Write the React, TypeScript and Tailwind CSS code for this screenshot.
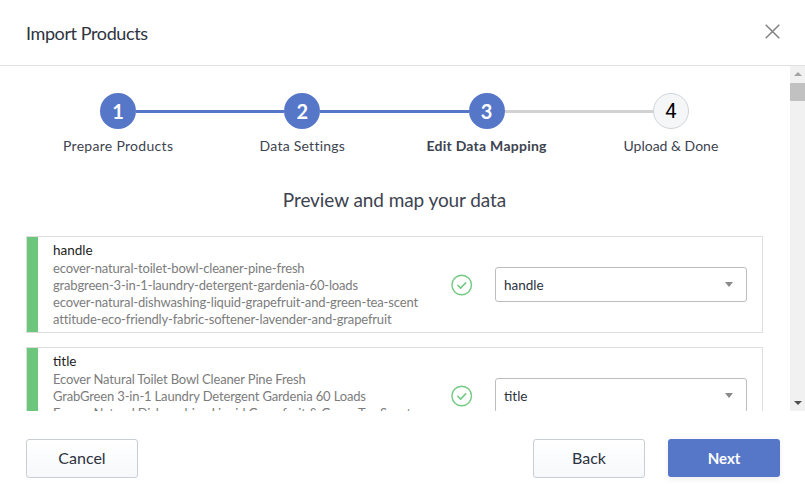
const steps = [
  { n: "1", label: "Prepare Products", state: "done", track: "tracking-[0.3px]" },
  { n: "2", label: "Data Settings", state: "done", track: "tracking-[0.25px]" },
  { n: "3", label: "Edit Data Mapping", state: "active", track: "tracking-[0.25px]" },
  { n: "4", label: "Upload & Done", state: "todo", track: "tracking-normal" },
];

const rows = [
  {
    name: "handle",
    values: [
      "ecover-natural-toilet-bowl-cleaner-pine-fresh",
      "grabgreen-3-in-1-laundry-detergent-gardenia-60-loads",
      "ecover-natural-dishwashing-liquid-grapefruit-and-green-tea-scent",
      "attitude-eco-friendly-fabric-softener-lavender-and-grapefruit",
    ],
  },
  {
    name: "title",
    values: [
      "Ecover Natural Toilet Bowl Cleaner Pine Fresh",
      "GrabGreen 3-in-1 Laundry Detergent Gardenia 60 Loads",
      "Ecover Natural Dishwashing Liquid Grapefruit & Green Tea Scent",
    ],
  },
];

function Step({ step, i }: { step: (typeof steps)[number]; i: number }) {
  const leftColor = i === 0 ? "bg-transparent" : i === 3 ? "bg-[#d2d2d2]" : "bg-[#5676c8]";
  const rightColor = i === 3 ? "bg-transparent" : i === 2 ? "bg-[#d2d2d2]" : "bg-[#5676c8]";
  return (
    <div className="flex flex-col items-center">
      <div className="flex w-full items-center">
        <div className={`h-[3px] flex-1 ${leftColor}`} />
        {step.state === "todo" ? (
          <div className="flex h-[36px] w-[36px] items-center justify-center rounded-full border border-[#d0d3d8] bg-[#f5f6f8] font-['Roboto',sans-serif] text-[20px] text-black">
            {step.n}
          </div>
        ) : (
          <div className="flex h-[36px] w-[36px] items-center justify-center rounded-full bg-[#5676c8] text-[20px] font-bold text-white">
            {step.n}
          </div>
        )}
        <div className={`h-[3px] flex-1 ${rightColor}`} />
      </div>
      <div
        className={`mt-[7px] text-[14px] leading-[20px] text-[#3d4350] ${step.track} ${step.state === "active" ? "font-bold" : ""}`}
      >
        {step.label}
      </div>
    </div>
  );
}

function Row({ row }: { row: (typeof rows)[number] }) {
  return (
    <div className="flex h-[97px] shrink-0 border border-[#dedede] bg-white">
      <div className="w-[11px] shrink-0 bg-[#6cc77c]" />
      <div className="w-[390px] shrink-0 pl-[15px] pt-[4px]">
        <div className="mb-[1px] text-[13.5px] leading-[18px] text-[#1d1d1d]">{row.name}</div>
        <div className="text-[13px] leading-[17px] tracking-[-0.16px] text-[#7c7c7c]">
          {row.values.map((v) => (
            <div key={v} className="whitespace-nowrap">
              {v}
            </div>
          ))}
        </div>
      </div>
      <div className="flex w-[67px] shrink-0 items-start justify-center pt-[37px]">
        <svg width="22" height="22" viewBox="0 0 22 22" fill="none">
          <circle cx="10.7" cy="11" r="9.8" stroke="#74ca83" strokeWidth="1.4" />
          <path d="M6.8 11.3l2.8 2.8 5-5.2" stroke="#74ca83" strokeWidth="1.6" strokeLinecap="round" strokeLinejoin="round" />
        </svg>
      </div>
      <div className="pt-[30px]">
        <div className="flex h-[35px] w-[252px] items-center justify-between rounded-[3px] border border-[#bdbdbd] bg-white pl-[8px] pr-[13px] text-[13.5px] text-[#2c3240]">
          <span className="pt-[1px]">{row.name}</span>
          <span className="h-0 w-0 border-x-[4.5px] border-t-[5px] border-x-transparent border-t-[#8a8a8a]" />
        </div>
      </div>
    </div>
  );
}

export default function App() {
  return (
    <div className="flex h-[495px] w-[805px] flex-col overflow-hidden bg-white font-['Lato',sans-serif]">
      <header className="flex h-[66px] shrink-0 items-center justify-between border-b border-[#e0e0e0] pl-[26px] pr-[25px]">
        <h1 className="text-[18px] leading-none tracking-[-0.4px] text-[#2e3440]">Import Products</h1>
        <svg width="15" height="15" viewBox="0 0 15 15" className="-mt-[2px]" fill="none">
          <path d="M0.7 0.7l13.6 13.6M14.3 0.7L0.7 14.3" stroke="#828282" strokeWidth="1.5" />
        </svg>
      </header>

      <div className="flex h-[345px] shrink-0">
        <main className="min-w-0 flex-1 overflow-hidden pl-[26px] pr-[27px] pt-[27px]">
          <div className="grid grid-cols-4">
            {steps.map((s, i) => (
              <Step key={s.n} step={s} i={i} />
            ))}
          </div>
          <h2 className="mt-[32px] text-center text-[19px] leading-[24px] tracking-[-0.08px] text-[#3d4350]">
            Preview and map your data
          </h2>
          <div className="mt-[24px] flex flex-col gap-[14px]">
            {rows.map((r) => (
              <Row key={r.name} row={r} />
            ))}
          </div>
        </main>
        <div className="flex w-[15px] shrink-0 flex-col items-center bg-[#f1f1f1]">
          <span className="mt-[6px] h-0 w-0 border-x-[4px] border-b-[4px] border-x-transparent border-b-[#a3a3a3]" />
          <div className="mt-[7px] h-[18px] w-full bg-[#c1c1c1]" />
          <span className="mb-[6px] mt-auto h-0 w-0 border-x-[4px] border-t-[4px] border-x-transparent border-t-[#505050]" />
        </div>
      </div>

      <footer className="flex flex-1 items-start justify-between pl-[26px] pr-[25px] pt-[28px]">
        <button className="h-[39px] w-[112px] rounded-[3px] border border-[#c9ced6] bg-gradient-to-b from-white to-[#f6f8fa] pb-[2px] text-[16px] text-[#2c3240]">
          Cancel
        </button>
        <div className="flex gap-[23px]">
          <button className="h-[39px] w-[112px] rounded-[3px] border border-[#c9ced6] bg-gradient-to-b from-white to-[#f6f8fa] pb-[2px] text-[16px] text-[#2c3240]">
            Back
          </button>
          <button className="h-[38px] w-[112px] rounded-[3px] bg-[#5676c8] text-[15px] font-bold text-white shadow-[0_2px_6px_rgba(0,0,0,0.08)]">
            Next
          </button>
        </div>
      </footer>
    </div>
  );
}
